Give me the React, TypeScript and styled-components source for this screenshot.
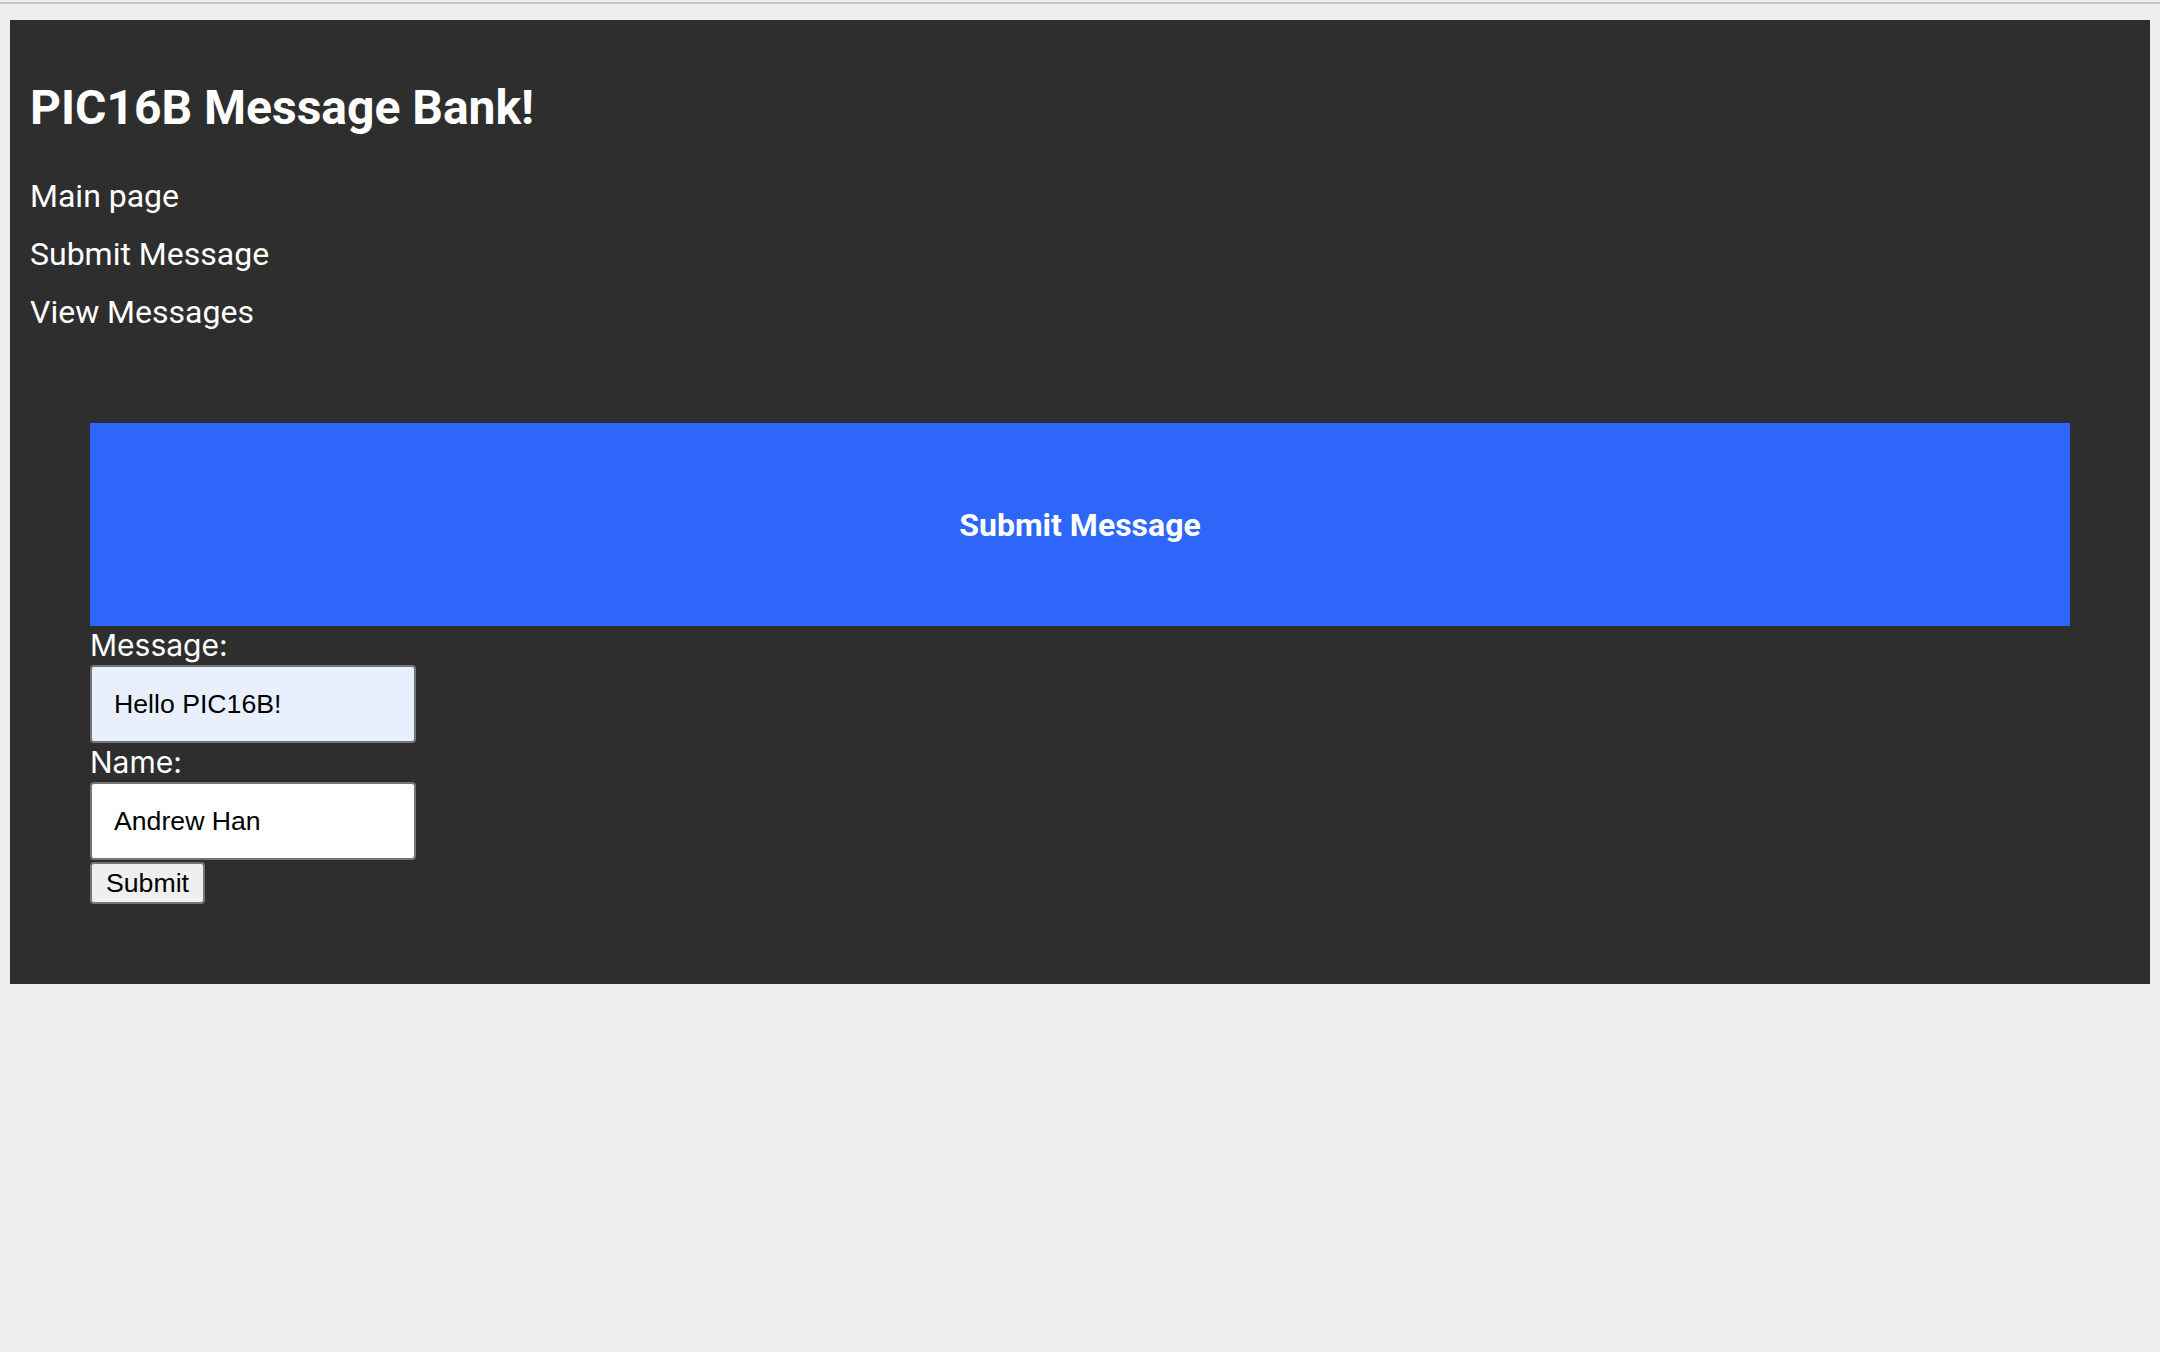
import styled, { createGlobalStyle } from "styled-components";

const GlobalStyle = createGlobalStyle`
  html, body {
    margin: 0;
    padding: 0;
    background-color: #eeeeee;
  }
  body {
    font-family: Roboto, "Liberation Sans", sans-serif;
  }
`;

const TopRule = styled.div`
  margin-top: 2px;
  height: 2px;
  background-color: #c8c8c8;
`;

const Panel = styled.div`
  margin: 16px 10px 0 10px;
  padding: 59px 20px 80px 20px;
  background-color: #2e2e2e;
  color: white;
`;

const Title = styled.h1`
  margin: 0;
  font-family: Roboto, sans-serif;
  font-weight: 700;
  font-size: 48px;
  line-height: normal;
`;

const Nav = styled.nav`
  display: flex;
  flex-direction: column;
  align-items: flex-start;
  gap: 20px;
  margin-top: 41px;
`;

const NavLink = styled.a`
  font-family: Roboto, sans-serif;
  font-size: 32px;
  line-height: normal;
  color: white;
  text-decoration: none;
`;

// 폼이 들어가는 영역
const Section = styled.section`
  margin: 92px 60px 0 60px;
`;

const Banner = styled.div`
  height: 203px;
  display: flex;
  justify-content: center;
  align-items: center;
  background-color: #2d66f8;
`;

const BannerTitle = styled.h2`
  margin: 0;
  font-family: Roboto, sans-serif;
  font-weight: 700;
  font-size: 32px;
  color: white;
`;

const Form = styled.form`
  display: flex;
  flex-direction: column;
  align-items: flex-start;
`;

const Label = styled.label`
  font-family: Inter, "Noto Sans", sans-serif;
  font-size: 30px;
  line-height: 39px;
  color: white;
`;

const Input = styled.input<{ $filled?: boolean }>`
  box-sizing: border-box;
  width: 326px;
  height: 78px;
  padding: 0 22px;
  border: 2px solid #767676;
  border-radius: 4px;
  font-family: "Liberation Sans", Arial, sans-serif;
  font-size: 26.67px;
  color: black;
  background-color: ${(props) => (props.$filled ? "#e8f0fe" : "white")};
  outline: none;
`;

const SubmitButton = styled.button`
  box-sizing: border-box;
  margin-top: 2px;
  height: 42px;
  padding: 0 14px;
  border: 2px solid #767676;
  border-radius: 4px;
  background-color: #efefef;
  font-family: "Liberation Sans", Arial, sans-serif;
  font-size: 26.67px;
  color: black;
`;

function App() {
  return (
    <>
      <GlobalStyle />
      <TopRule />
      <Panel>
        <Title>PIC16B Message Bank!</Title>
        <Nav>
          <NavLink href="#">Main page</NavLink>
          <NavLink href="#">Submit Message</NavLink>
          <NavLink href="#">View Messages</NavLink>
        </Nav>
        <Section>
          <Banner>
            <BannerTitle>Submit Message</BannerTitle>
          </Banner>
          <Form onSubmit={(e) => e.preventDefault()}>
            <Label htmlFor="message">Message:</Label>
            <Input id="message" $filled defaultValue="Hello PIC16B!" />
            <Label htmlFor="handle">Name:</Label>
            <Input id="handle" defaultValue="Andrew Han" />
            <SubmitButton type="submit">Submit</SubmitButton>
          </Form>
        </Section>
      </Panel>
    </>
  );
}

export default App;
